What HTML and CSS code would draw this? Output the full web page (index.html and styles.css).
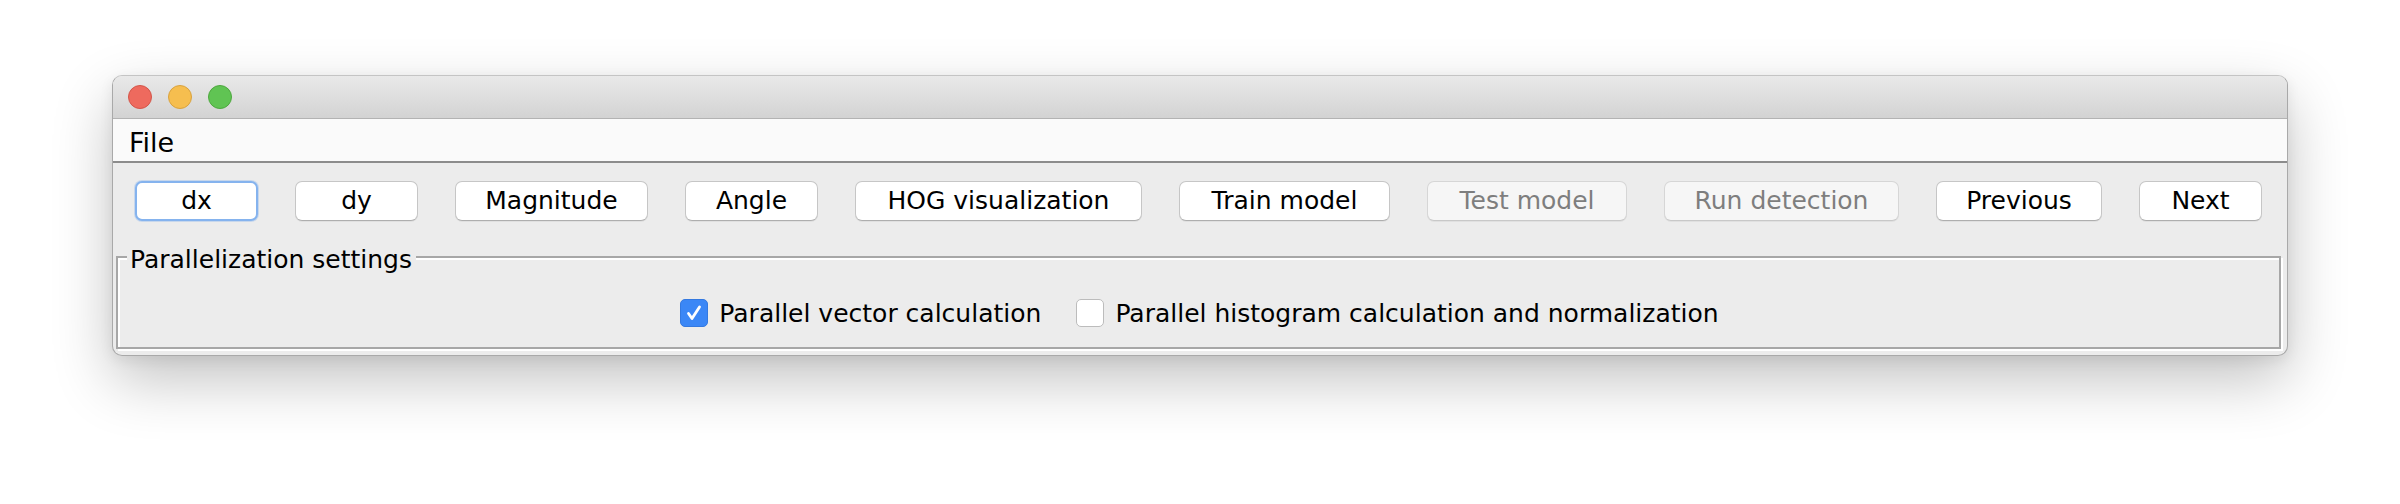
FILE: index.html
```html
<!DOCTYPE html>
<html>
<head>
<meta charset="utf-8">
<title>HOG</title>
<link rel="stylesheet" href="styles.css">
</head>
<body>
<div class="window">
  <div class="titlebar">
    <span class="light red"></span>
    <span class="light yellow"></span>
    <span class="light green"></span>
  </div>
  <div class="menubar">
    <span class="menu">File</span>
  </div>
  <div class="content">
    <div class="toolbar">
      <button class="btn focused">dx</button>
      <button class="btn">dy</button>
      <button class="btn">Magnitude</button>
      <button class="btn">Angle</button>
      <button class="btn">HOG visualization</button>
      <button class="btn">Train model</button>
      <button class="btn" disabled>Test model</button>
      <button class="btn" disabled>Run detection</button>
      <button class="btn">Previous</button>
      <button class="btn">Next</button>
    </div>
    <div class="group">
      <span class="group-title">Parallelization settings</span>
      <div class="checks">
        <label class="check">
          <span class="box checked"><svg viewBox="0 0 28 28" width="28" height="28"><path d="M8.5 14.5 L12 19.5 L19.5 8" fill="none" stroke="#fff" stroke-width="2.8" stroke-linecap="round" stroke-linejoin="round"/></svg></span>
          <span class="check-label">Parallel vector calculation</span>
        </label>
        <label class="check">
          <span class="box"></span>
          <span class="check-label">Parallel histogram calculation and normalization</span>
        </label>
      </div>
    </div>
  </div>
</div>
</body>
</html>
```
FILE: styles.css
```css
html, body {
  margin: 0;
  padding: 0;
  background: #ffffff;
}

body {
  box-sizing: border-box;
  min-height: 504px;
  padding: 75px 0 0 112px;
  font-family: "DejaVu Sans", "Liberation Sans", sans-serif;
  color: #000;
}

.window {
  box-sizing: border-box;
  width: 2176px;
  height: 281px;
  border: 1px solid #a9a9a9;
  border-top-color: #c4c4c4;
  border-radius: 10px;
  overflow: hidden;
  background: #ececec;
  box-shadow: 0 24px 60px rgba(0, 0, 0, 0.24), 0 4px 14px rgba(0, 0, 0, 0.07);
  display: flex;
  flex-direction: column;
}

.titlebar {
  height: 42px;
  border-bottom: 1px solid #b3b3b3;
  background: linear-gradient(#e9e9e9, #d3d3d3);
  display: flex;
  align-items: center;
  gap: 16px;
  padding-left: 15px;
}

.light {
  box-sizing: border-box;
  width: 24px;
  height: 24px;
  border-radius: 50%;
  border: 1px solid;
}
.light.red { background: #ee6a5e; border-color: #d2564a; }
.light.yellow { background: #f6be4f; border-color: #d8a23f; }
.light.green { background: #60c453; border-color: #4ea73f; }

.menubar {
  box-sizing: border-box;
  height: 44px;
  background: #fafafa;
  border-bottom: 2px solid #8c8c8c;
  padding: 5px 0 0 16px;
}

.menu {
  display: block;
  font-size: 27px;
  line-height: 37px;
}

.content {
  flex: 1;
  display: flex;
  flex-direction: column;
}

.toolbar {
  display: grid;
  grid-template-columns: 123px 123px 193px 133px 287px 211px 200px 235px 166px 123px;
  column-gap: 37px;
  padding: 18px 0 0 22px;
}

.btn {
  box-sizing: border-box;
  height: 40px;
  margin: 0;
  padding: 0;
  font-family: "DejaVu Sans", "Liberation Sans", sans-serif;
  font-size: 25px;
  line-height: 38px;
  color: #000;
  background: #ffffff;
  border: 1px solid #c6c6c6;
  border-bottom-color: #aeaeae;
  border-radius: 7px;
  box-shadow: 0 1px 0 rgba(0, 0, 0, 0.05);
  text-align: center;
  white-space: nowrap;
}

.btn.focused {
  border: 2px solid #85b3ee;
  line-height: 36px;
  box-shadow: 0 0 0 1px rgba(133, 179, 238, 0.35);
}

.btn:disabled {
  background: #f6f6f6;
  color: #7e7e7e;
  border-color: #d6d6d6;
  border-bottom-color: #c8c8c8;
}

.group {
  position: relative;
  box-sizing: border-box;
  height: 93px;
  margin: 35px 6px 0 3px;
  border: 2px solid #a7a7a7;
  box-shadow: 2px 2px 0 #ffffff, inset 2px 2px 0 #ffffff;
  padding-top: 40px;
}

.group-title {
  position: absolute;
  left: 9px;
  top: -13px;
  padding: 0 4px 0 3px;
  background: #ececec;
  font-size: 25px;
  line-height: 29px;
  white-space: nowrap;
}

.checks {
  display: flex;
  justify-content: center;
  gap: 35px;
  padding-left: 2px;
}

.check {
  display: flex;
  align-items: center;
  gap: 11px;
}

.box {
  box-sizing: border-box;
  width: 28px;
  height: 28px;
  border-radius: 5px;
  background: #ffffff;
  border: 1px solid #bcbcbc;
  display: flex;
}

.box.checked {
  background: #3b87f6;
  border-color: #3479e0;
}

.box svg {
  margin: -1px;
}

.check-label {
  font-size: 25px;
  line-height: 28px;
  padding-top: 2px;
  white-space: nowrap;
}
```
